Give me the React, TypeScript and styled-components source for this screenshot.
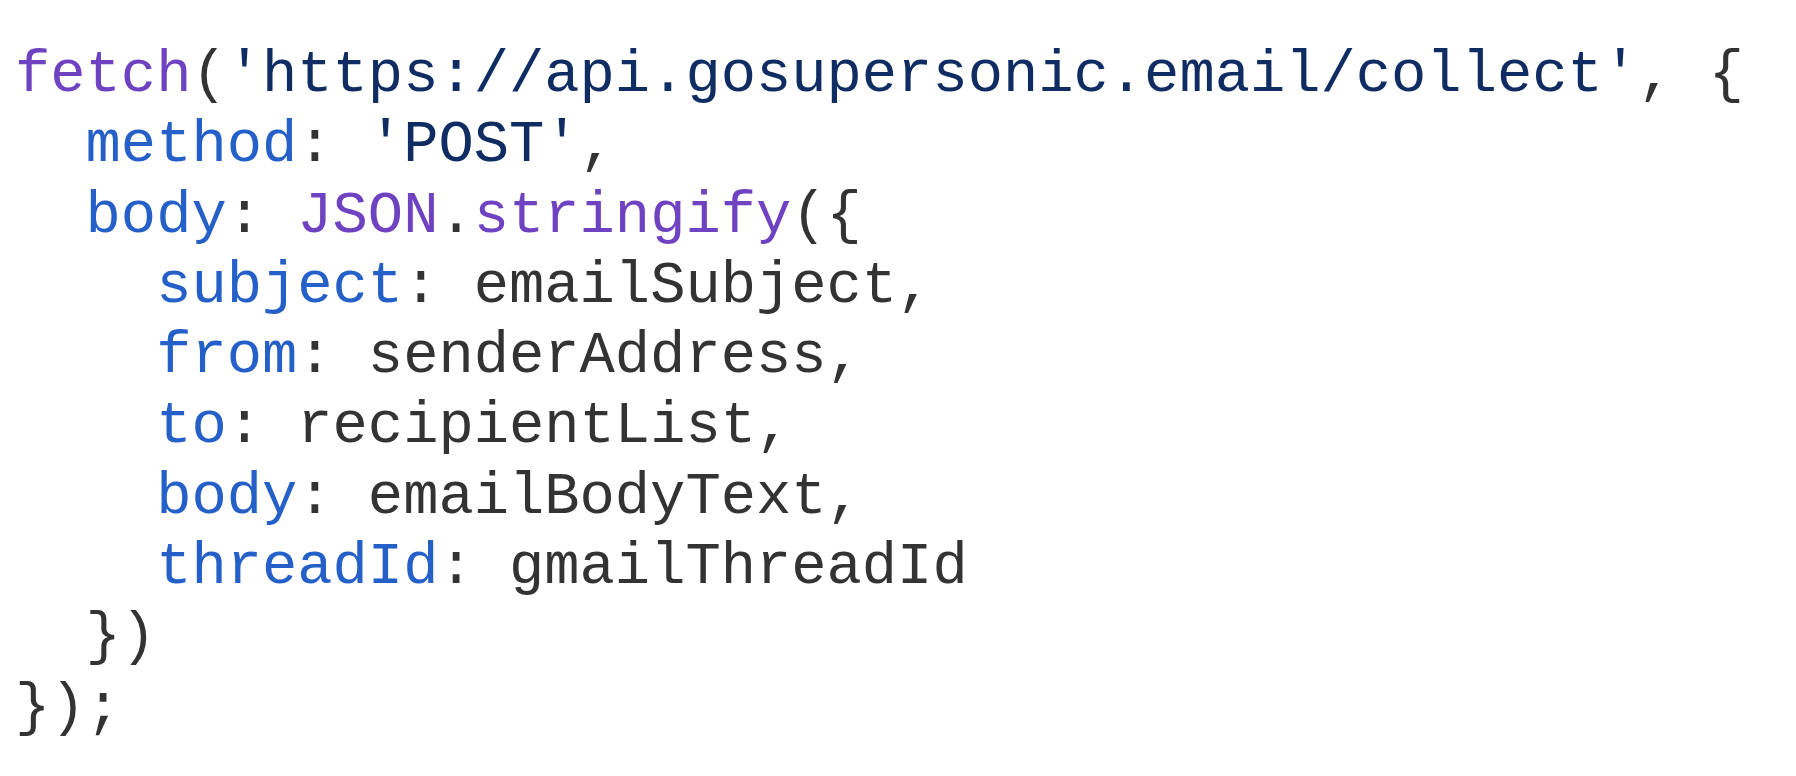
import React from "react";
import styled, { createGlobalStyle } from "styled-components";

const Global = createGlobalStyle`
  html, body { margin: 0; padding: 0; background: #ffffff; }
`;

const Pre = styled.pre`
  margin: 0;
  padding: 41px 0 0 15px;
  font-family: "Liberation Mono", "Courier New", monospace;
  font-size: 58.8px;
  line-height: 70.3px;
  color: #333333;
  white-space: pre;
`;

const Tok = styled.span<{ $k: "fn" | "str" | "key" | "p" }>`
  color: ${(p) =>
    p.$k === "fn"
      ? "#6f42c1"
      : p.$k === "str"
      ? "#0f2d63"
      : p.$k === "key"
      ? "#2460c8"
      : "#333333"};
`;

export default function App() {
  return (
    <>
      <Global />
      <Pre>
        <Tok $k="fn">fetch</Tok>
        <Tok $k="p">(</Tok>
        <Tok $k="str">'https://api.gosupersonic.email/collect'</Tok>
        <Tok $k="p">, {"{"}</Tok>
        {"\n  "}
        <Tok $k="key">method</Tok>
        <Tok $k="p">: </Tok>
        <Tok $k="str">'POST'</Tok>
        <Tok $k="p">,</Tok>
        {"\n  "}
        <Tok $k="key">body</Tok>
        <Tok $k="p">: </Tok>
        <Tok $k="fn">JSON</Tok>
        <Tok $k="p">.</Tok>
        <Tok $k="fn">stringify</Tok>
        <Tok $k="p">{"({"}</Tok>
        {"\n    "}
        <Tok $k="key">subject</Tok>
        <Tok $k="p">: emailSubject,</Tok>
        {"\n    "}
        <Tok $k="key">from</Tok>
        <Tok $k="p">: senderAddress,</Tok>
        {"\n    "}
        <Tok $k="key">to</Tok>
        <Tok $k="p">: recipientList,</Tok>
        {"\n    "}
        <Tok $k="key">body</Tok>
        <Tok $k="p">: emailBodyText,</Tok>
        {"\n    "}
        <Tok $k="key">threadId</Tok>
        <Tok $k="p">: gmailThreadId</Tok>
        {"\n  "}
        <Tok $k="p">{"})"}</Tok>
        {"\n"}
        <Tok $k="p">{"});"}</Tok>
      </Pre>
    </>
  );
}
